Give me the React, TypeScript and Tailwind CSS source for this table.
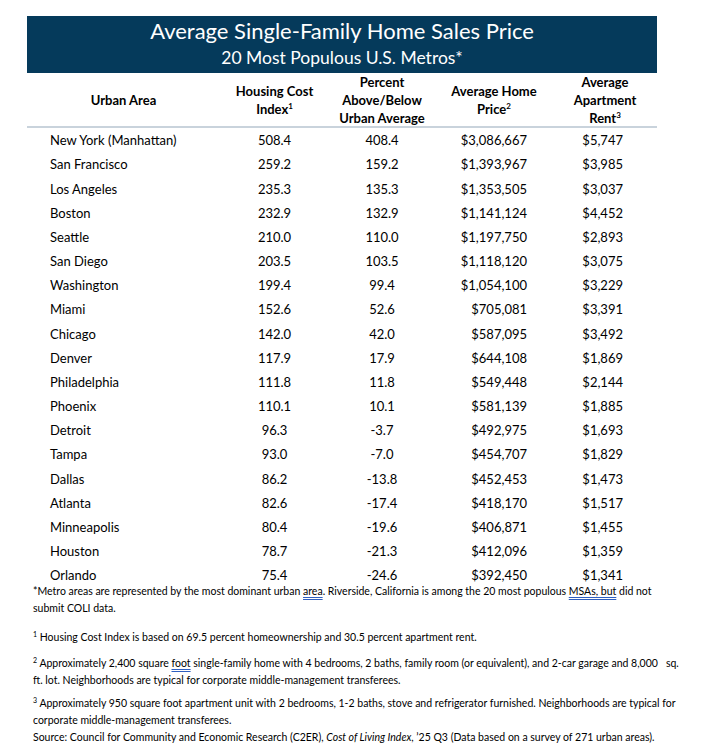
const rows: [string, string, string, string, string][] = [
  ['New York (Manhattan)', '508.4', '408.4', '$3,086,667', '$5,747'],
  ['San Francisco', '259.2', '159.2', '$1,393,967', '$3,985'],
  ['Los Angeles', '235.3', '135.3', '$1,353,505', '$3,037'],
  ['Boston', '232.9', '132.9', '$1,141,124', '$4,452'],
  ['Seattle', '210.0', '110.0', '$1,197,750', '$2,893'],
  ['San Diego', '203.5', '103.5', '$1,118,120', '$3,075'],
  ['Washington', '199.4', '99.4', '$1,054,100', '$3,229'],
  ['Miami', '152.6', '52.6', '$705,081', '$3,391'],
  ['Chicago', '142.0', '42.0', '$587,095', '$3,492'],
  ['Denver', '117.9', '17.9', '$644,108', '$1,869'],
  ['Philadelphia', '111.8', '11.8', '$549,448', '$2,144'],
  ['Phoenix', '110.1', '10.1', '$581,139', '$1,885'],
  ['Detroit', '96.3', '-3.7', '$492,975', '$1,693'],
  ['Tampa', '93.0', '-7.0', '$454,707', '$1,829'],
  ['Dallas', '86.2', '-13.8', '$452,453', '$1,473'],
  ['Atlanta', '82.6', '-17.4', '$418,170', '$1,517'],
  ['Minneapolis', '80.4', '-19.6', '$406,871', '$1,455'],
  ['Houston', '78.7', '-21.3', '$412,096', '$1,359'],
  ['Orlando', '75.4', '-24.6', '$392,450', '$1,341'],
]

const grid = 'grid grid-cols-[193px_109px_106px_118px_104px]'

function Sup({ children, small }: { children: React.ReactNode; small?: boolean }) {
  return <sup className={`${small ? 'text-[7px]' : 'text-[8px]'} top-[-0.6em]`}>{children}</sup>
}

function Spell({ children }: { children: React.ReactNode }) {
  return (
    <span className="underline decoration-double decoration-[#2e5fc0] decoration-1 underline-offset-[2px]">
      {children}
    </span>
  )
}

export default function App() {
  return (
    <div className="w-[701px] h-[750px] bg-white text-black font-['Lato','Open_Sans',sans-serif] pt-[16px] pl-[27px]">
      <div className="w-[630px]">
        {/* Title band */}
        <div className="h-[57px] bg-[#053a5b] text-white flex flex-col items-center">
          <div className="text-[22px] leading-[26px] mt-[2px]">Average Single-Family Home Sales Price</div>
          <div className="text-[17.5px] leading-[22px] mt-[3px]">20 Most Populous U.S. Metros*</div>
        </div>

        {/* Column headers */}
        <div className={`${grid} h-[55px] items-center text-center font-bold text-[13px] leading-[18px] border-b-2 border-[#c9d3dc]`}>
          <div>Urban Area</div>
          <div>
            Housing Cost
            <br />
            Index<Sup>1</Sup>
          </div>
          <div>
            Percent
            <br />
            Above/Below
            <br />
            Urban Average
          </div>
          <div>
            Average Home
            <br />
            Price<Sup>2</Sup>
          </div>
          <div>
            Average
            <br />
            Apartment
            <br />
            Rent<Sup>3</Sup>
          </div>
        </div>

        {/* Rows */}
        <div className="pt-[1px] text-[13px]">
          {rows.map((r) => (
            <div key={r[0]} className={`${grid} h-[24.17px] items-center`}>
              <div className="pl-[23px]">{r[0]}</div>
              <div className="text-center">{r[1]}</div>
              <div className="text-center">{r[2]}</div>
              <div className="text-right pr-[26px]">{r[3]}</div>
              <div className="text-right pr-[34px]">{r[4]}</div>
            </div>
          ))}
        </div>

        {/* Footnotes */}
        <div className="pl-[6px] mt-[-5px] text-[10.5px] leading-[17px] whitespace-nowrap">
          <p>
            *Metro areas are represented by the most dominant urban <Spell>area</Spell>. Riverside, California is among the 20 most populous <Spell>MSAs, but</Spell> did not
            <br />
            submit COLI data.
          </p>
          <p className="mt-[12px]">
            <Sup small>1</Sup> Housing Cost Index is based on 69.5 percent homeownership and 30.5 percent apartment rent.
          </p>
          <p className="mt-[9px]">
            <Sup small>2</Sup> Approximately 2,400 square <Spell>foot</Spell> single-family home with 4 bedrooms, 2 baths, family room (or equivalent), and 2-car garage and 8,000&nbsp;&nbsp;&nbsp;sq.
            <br />
            ft. lot. Neighborhoods are typical for corporate middle-management transferees.
          </p>
          <p className="mt-[6px]">
            <Sup small>3</Sup> Approximately 950 square foot apartment unit with 2 bedrooms, 1-2 baths, stove and refrigerator furnished. Neighborhoods are typical for
            <br />
            corporate middle-management transferees.
          </p>
          <p>
            Source: Council for Community and Economic Research (C2ER), <i>Cost of Living Index</i>, ’25 Q3 (Data based on a survey of 271 urban areas).
          </p>
        </div>
      </div>
    </div>
  )
}
